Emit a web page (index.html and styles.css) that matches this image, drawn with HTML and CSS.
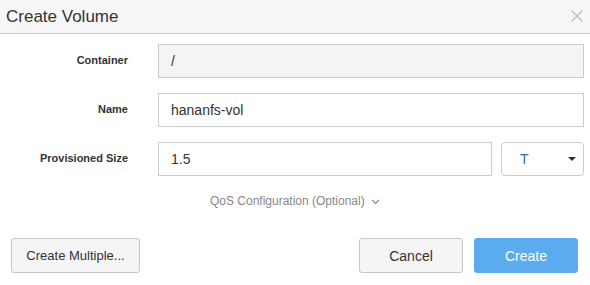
FILE: index.html
```html
<!DOCTYPE html>
<html lang="en">
<head>
    <meta charset="UTF-8">
    <title>Create Volume</title>
    <link rel="stylesheet" href="styles.css">
</head>
<body>
    <div class="dialog">
        <div class="dialog-header">
            <h2>Create Volume</h2>
            <svg class="close" width="12" height="12" viewBox="0 0 12 12"><path d="M0.5 0.5l11 11M11.5 0.5l-11 11" stroke="#bbb" stroke-width="1.2" fill="none"/></svg>
        </div>
        <div class="dialog-body">
            <div class="row">
                <label>Container</label>
                <div class="field readonly">/</div>
            </div>
            <div class="row">
                <label>Name</label>
                <div class="field">hananfs-vol</div>
            </div>
            <div class="row">
                <label>Provisioned Size</label>
                <div class="field size">1.5</div>
                <div class="select">T <span class="caret"></span></div>
            </div>
            <div class="qos">QoS Configuration (Optional)
                <svg width="9" height="6" viewBox="0 0 9 6"><path d="M1 1l3.5 3.5L8 1" fill="none" stroke="#888" stroke-width="1.1"/></svg>
            </div>
        </div>
        <div class="dialog-footer">
            <button class="btn multi">Create Multiple...</button>
            <div class="spacer"></div>
            <button class="btn cancel">Cancel</button>
            <button class="btn primary">Create</button>
        </div>
    </div>
</body>
</html>
```

FILE: styles.css
```css
body {
    margin: 0;
    font-family: 'Liberation Sans', Arial, sans-serif;
    color: #333;
    background: #fff;
}
.dialog {
    width: 590px;
}
.dialog-header {
    height: 33px;
    background: #f6f6f6;
    border-bottom: 1px solid #c8c8c8;
    display: flex;
    align-items: center;
    justify-content: space-between;
    padding: 0 6px;
}
.dialog-header h2 {
    margin: 0;
    font-size: 17px;
    font-weight: normal;
    color: #333;
}
.close {
    margin: 0 1px 1px 0;
}
.dialog-body {
    padding: 10px 6px 0 0;
}
.row {
    display: flex;
    align-items: center;
    margin-bottom: 15px;
}
.row label {
    width: 128px;
    text-align: right;
    font-size: 11px;
    font-weight: bold;
    color: #333;
    margin-right: 30px;
    padding-bottom: 2px;
}
.field {
    flex: 1;
    height: 32px;
    border: 1px solid #ccc;
    padding: 0 12px;
    font-size: 14px;
    line-height: 32px;
    color: #333;
}
.field.readonly {
    background: #f4f4f4;
}
.select {
    width: 63px;
    height: 32px;
    margin-left: 9px;
    border: 1px solid #ccc;
    border-radius: 4px;
    padding: 0 0 0 18px;
    font-size: 14px;
    line-height: 32px;
    color: #2a6fb0;
    position: relative;
}
.caret {
    position: absolute;
    right: 7px;
    top: 14px;
    border-left: 4px solid transparent;
    border-right: 4px solid transparent;
    border-top: 4px solid #333;
}
.qos {
    text-align: center;
    font-size: 12px;
    line-height: 14px;
    color: #888;
    margin-top: 18px;
    padding-left: 6px;
}
.qos svg {
    margin-left: 3px;
    vertical-align: middle;
}
.dialog-footer {
    display: flex;
    padding: 30px 12px 0 11px;
}
.spacer {
    flex: 1;
}
.btn {
    height: 35px;
    border: 1px solid #c6c6c6;
    border-radius: 3px;
    background: #f5f5f5;
    font-family: inherit;
    font-size: 14px;
    color: #333;
    padding: 0;
}
.multi {
    width: 129px;
    font-size: 13px;
}
.cancel {
    width: 104px;
    margin-right: 11px;
}
.primary {
    width: 104px;
    background: #5aacee;
    border-color: #5aacee;
    color: #fff;
}
```
